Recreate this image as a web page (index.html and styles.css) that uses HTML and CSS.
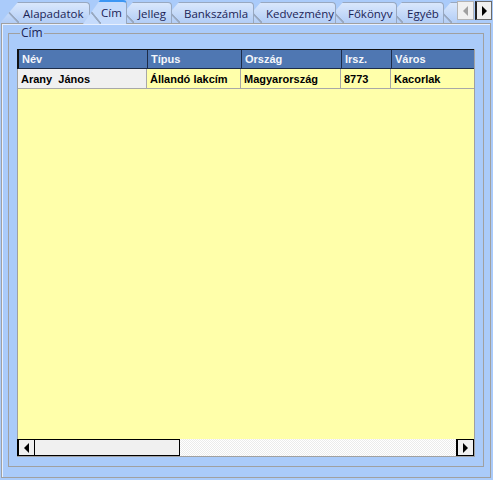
FILE: index.html
```html
<!DOCTYPE html>
<html lang="hu">
<head>
<meta charset="utf-8">
<title>Cím</title>
<link rel="stylesheet" href="styles.css">
</head>
<body>
<div class="window">
  <div class="strip">
    <div class="tabs">
      <div class="tab t1">Alapadatok</div>
      <div class="tab t2 active">Cím</div>
      <div class="tab t3">Jelleg</div>
      <div class="tab t4">Bankszámla</div>
      <div class="tab t5">Kedvezmény</div>
      <div class="tab t6">Főkönyv</div>
      <div class="tab t7">Egyéb</div>
      <div class="tab t8 cut"></div>
    </div>
    <div class="tabnav">
      <span class="nav-btn prev"><i class="tri-left gray"></i></span>
      <span class="nav-btn next"><i class="tri-right"></i></span>
    </div>
  </div>
  <div class="panel">
    <fieldset class="group">
      <legend>Cím</legend>
      <div class="grid">
        <div class="row head">
          <div class="cell">Név</div>
          <div class="cell">Típus</div>
          <div class="cell">Ország</div>
          <div class="cell">Irsz.</div>
          <div class="cell">Város</div>
        </div>
        <div class="row data">
          <div class="cell first">Arany&nbsp; János</div>
          <div class="cell">Állandó lakcím</div>
          <div class="cell">Magyarország</div>
          <div class="cell">8773</div>
          <div class="cell">Kacorlak</div>
        </div>
        <div class="fill"></div>
        <div class="hscroll">
          <span class="sb-btn"><i class="tri-left"></i></span>
          <span class="sb-thumb"></span>
          <span class="sb-track"></span>
          <span class="sb-btn"><i class="tri-right"></i></span>
        </div>
      </div>
    </fieldset>
  </div>
</div>
</body>
</html>
```

FILE: styles.css
```css
* { box-sizing: border-box; }
html, body { margin: 0; padding: 0; }
body {
  background: #aacbfa;
  width: 493px;
  height: 480px;
  overflow: hidden;
  font-family: "Open Sans", "Liberation Sans", sans-serif;
}
.window { width: 493px; height: 480px; }

/* ---------- tab strip ---------- */
.strip {
  height: 23px;
  display: flex;
  align-items: flex-end;
  position: relative;
  z-index: 2;
}
.tabs { display: flex; align-items: flex-end; height: 23px; }
.tab {
  position: relative;
  height: 21px;
  padding: 0 0 0 23px;
  display: flex;
  align-items: center;
  font-size: 11.5px;
  color: #1b2456;
  white-space: nowrap;
  border-top: 1px solid #98a8c0;
  border-right: 1px solid #98a8c0;
  border-top-right-radius: 4px;
  background: linear-gradient(#d9e7fc, #b2cdf6);
  clip-path: polygon(0 100%, 18px 0, 100% 0, 100% 100%);
}
.tab::before {
  content: "";
  position: absolute;
  left: 0; top: 0;
  width: 19px; height: 100%;
  background: linear-gradient(to top right, transparent calc(50% - 1.2px), #98a8c0 calc(50% - 0.6px), #98a8c0 calc(50% + 0.6px), transparent calc(50% + 1.2px));
}
.t1 { width: 90px; z-index: 9; }
.t2 { width: 44px; margin-left: -7px; }
.t3 { width: 57px; margin-left: -12px; z-index: 7; }
.t4 { width: 93px; margin-left: -11px; z-index: 6; }
.t5 { width: 93px; margin-left: -11px; z-index: 5; }
.t6 { width: 72px; margin-left: -11px; z-index: 4; }
.t7 { width: 60px; margin-left: -13px; z-index: 3; }
.t8 { width: 24px; margin-left: -11px; z-index: 2; }
.tab.cut { border-right: 0; border-top-right-radius: 0; }
.tab.active {
  z-index: 10;
  height: 24px;
  margin-bottom: -1px;
  padding-left: 18px;
  padding-bottom: 1px;
  background: #c5dbfc;
  border-top: 2px solid #3c96f4;
  clip-path: polygon(0 100%, 17px 0, 100% 0, 100% 100%);
}
.tab.active::before { width: 18px; }

.tabnav {
  margin-left: auto;
  margin-right: 1px;
  align-self: flex-start;
  margin-top: 1px;
  display: flex;
}
.nav-btn {
  width: 17px;
  height: 19px;
  background: #f0f0f0;
  border: 1px solid #b4b4b4;
  display: flex;
  align-items: center;
  justify-content: center;
}
.nav-btn.next { margin-left: 1px; border-color: #6a6a6a; border-left: 2px solid #222; }
.tri-left, .tri-right {
  display: block;
  width: 0; height: 0;
  border-top: 5px solid transparent;
  border-bottom: 5px solid transparent;
}
.tri-left { border-right: 5px solid #000; }
.tri-right { border-left: 5px solid #000; }
.tri-left.gray { border-right-color: #a0a0a0; }

/* ---------- panel & group ---------- */
.panel {
  height: 455px;
  margin: 0 2px 0 1px;
  border: 1px solid #a0a0a0;
  box-shadow: inset 1px 1px 0 #e8f0fe;
  padding: 0 6px 0 6px;
  position: relative;
  z-index: 1;
}
.group {
  margin: 2px 0 0 0;
  padding: 9px 8px 9px 8px;
  border: 1px solid #a0a0a0;
  min-width: 0;
}
.group legend {
  font-size: 12px;
  line-height: 14px;
  color: #1b2456;
  padding: 0 1px;
  margin-left: 3px;
}

/* ---------- grid ---------- */
.grid {
  height: 408px;
  display: flex;
  flex-direction: column;
  border-right: 1px solid #a0a0a0;
  border-bottom: 1px solid #a0a0a0;
  border-left: 1px solid #a0a0a0;
  background: #ffffaa;
  font-family: "Liberation Sans", Arial, sans-serif;
  font-size: 11px;
  font-weight: bold;
}
.row {
  display: grid;
  grid-template-columns: 129px 94px 100px 50px 1fr;
  height: 20px;
}
.cell {
  display: flex;
  align-items: center;
  padding-left: 3px;
  white-space: nowrap;
  overflow: hidden;
}
.head {
  background: #4f77b2;
  color: #f4f6fa;
  border-top: 1px solid #111;
  margin-left: -1px;
  border-left: 2px solid #111;
  border-bottom: 1px solid #1d2c48;
}
.head .cell { border-right: 1px solid #1d2c48; }
.head .cell:last-child { border-right: 0; }
.data { border-bottom: 1px solid #a8a8a8; color: #000; }
.data .cell { border-right: 1px solid #a8a8a8; }
.data .cell:last-child { border-right: 0; }
.data .first { background: #f0f0f0; }
.fill { flex: 1; }

.hscroll {
  height: 17px;
  display: flex;
  margin-left: -1px;
}
.sb-btn {
  width: 18px;
  height: 17px;
  background: #f0f0f0;
  border: 1px solid #000;
  border-left-width: 2px;
  display: flex;
  align-items: center;
  justify-content: center;
}
.sb-thumb {
  width: 145px;
  height: 17px;
  background: #f0f0f0;
  border: 1px solid #000;
  border-left: 0;
}
.sb-track {
  flex: 1;
  height: 17px;
  background-color: #ffffff;
  background-image: conic-gradient(#ebebeb 25%, #ffffff 0 50%, #ebebeb 0 75%, #ffffff 0);
  background-size: 2px 2px;
}
```
